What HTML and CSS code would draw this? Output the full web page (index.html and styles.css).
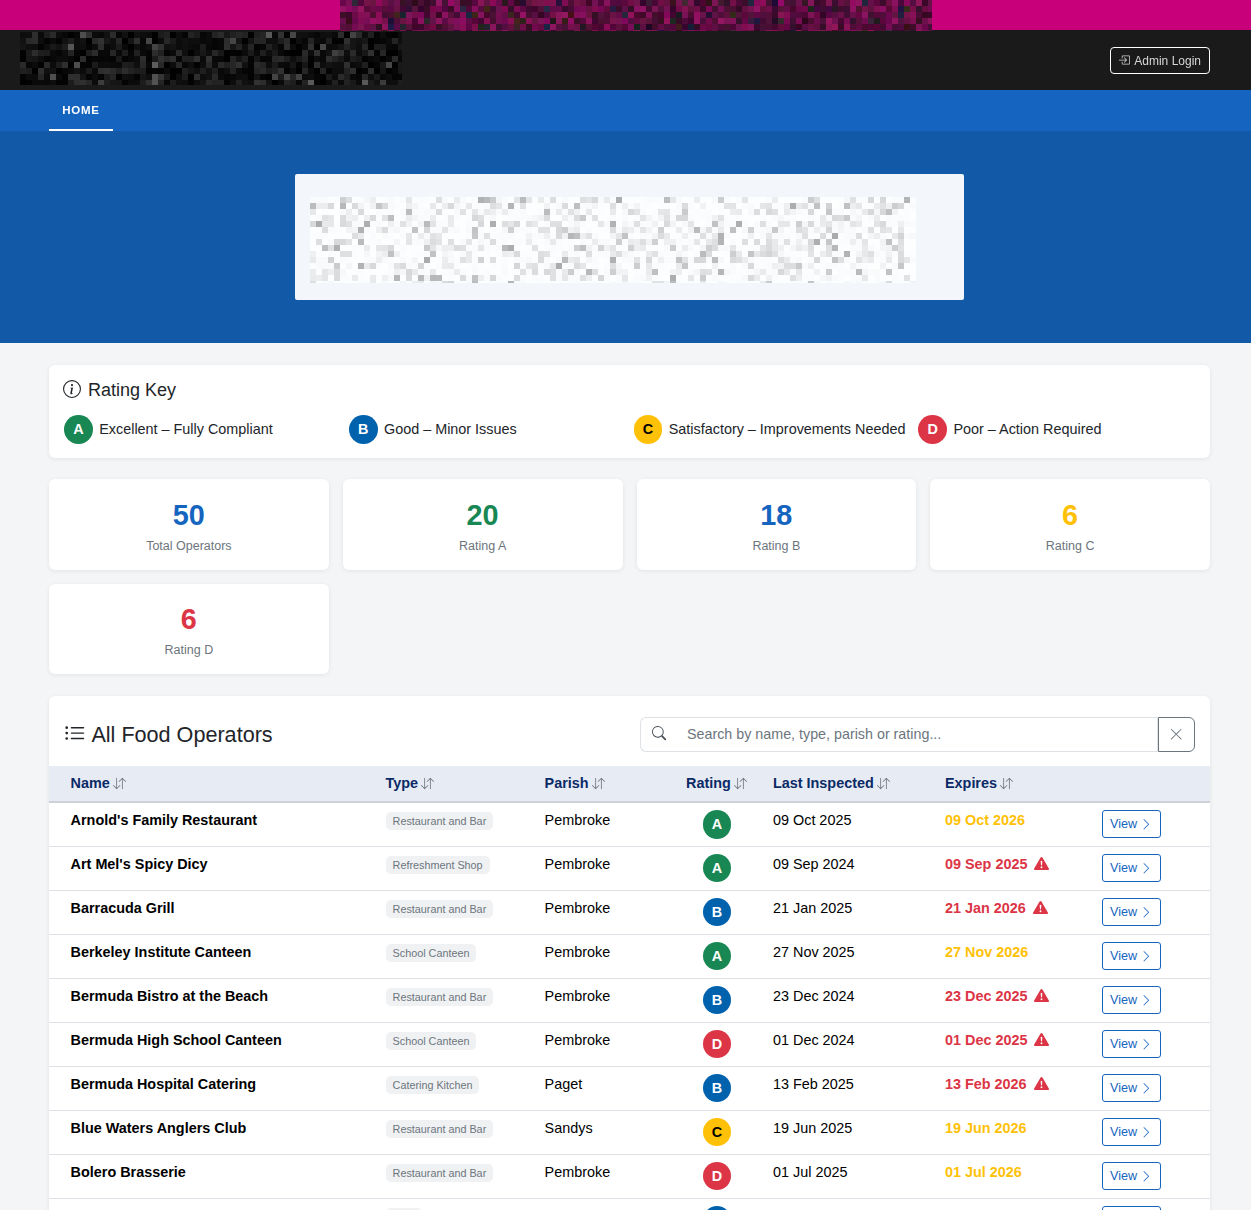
FILE: index.html
```html
<!DOCTYPE html>
<html lang="en">
<head>
    <meta charset="UTF-8">
    <meta name="viewport" content="width=device-width, initial-scale=1.0">
    <title>Food Operators</title>
    <link rel="stylesheet" href="styles.css">
</head>
<body>

    <svg class="icon-sprite" aria-hidden="true">
        <symbol id="i-login" viewBox="0 0 16 16"><path fill-rule="evenodd" d="M6 3.5a.5.5 0 0 1 .5-.5h8a.5.5 0 0 1 .5.5v9a.5.5 0 0 1-.5.5h-8a.5.5 0 0 1-.5-.5v-2a.5.5 0 0 0-1 0v2A1.5 1.5 0 0 0 6.5 14h8a1.5 1.5 0 0 0 1.5-1.5v-9A1.5 1.5 0 0 0 14.5 2h-8A1.5 1.5 0 0 0 5 3.5v2a.5.5 0 0 0 1 0v-2z"/><path fill-rule="evenodd" d="M11.854 8.354a.5.5 0 0 0 0-.708l-3-3a.5.5 0 1 0-.708.708L10.293 7.5H1.5a.5.5 0 0 0 0 1h8.793l-2.147 2.146a.5.5 0 0 0 .708.708l3-3z"/></symbol>
        <symbol id="i-info" viewBox="0 0 16 16"><path d="M8 15A7 7 0 1 1 8 1a7 7 0 0 1 0 14zm0 1A8 8 0 1 0 8 0a8 8 0 0 0 0 16z"/><path d="m8.93 6.588-2.29.287-.082.38.45.083c.294.07.352.176.288.469l-.738 3.468c-.194.897.105 1.319.808 1.319.545 0 1.178-.252 1.465-.598l.088-.416c-.2.176-.492.246-.686.246-.275 0-.375-.193-.304-.533L8.93 6.588zM9 4.5a1 1 0 1 1-2 0 1 1 0 0 1 2 0z"/></symbol>
        <symbol id="i-list" viewBox="0 0 16 16"><path fill-rule="evenodd" d="M5 11.5a.5.5 0 0 1 .5-.5h9a.5.5 0 0 1 0 1h-9a.5.5 0 0 1-.5-.5zm0-4a.5.5 0 0 1 .5-.5h9a.5.5 0 0 1 0 1h-9a.5.5 0 0 1-.5-.5zm0-4a.5.5 0 0 1 .5-.5h9a.5.5 0 0 1 0 1h-9a.5.5 0 0 1-.5-.5zm-3 1a1 1 0 1 0 0-2 1 1 0 0 0 0 2zm0 4a1 1 0 1 0 0-2 1 1 0 0 0 0 2zm0 4a1 1 0 1 0 0-2 1 1 0 0 0 0 2z"/></symbol>
        <symbol id="i-search" viewBox="0 0 16 16"><path d="M11.742 10.344a6.5 6.5 0 1 0-1.397 1.398h-.001c.03.04.062.078.098.115l3.85 3.85a1 1 0 0 0 1.415-1.414l-3.85-3.85a1.007 1.007 0 0 0-.115-.1zM12 6.5a5.5 5.5 0 1 1-11 0 5.5 5.5 0 0 1 11 0z"/></symbol>
        <symbol id="i-x" viewBox="0 0 16 16"><path d="M2.146 2.854a.5.5 0 1 1 .708-.708L8 7.293l5.146-5.147a.5.5 0 0 1 .708.708L8.707 8l5.147 5.146a.5.5 0 0 1-.708.708L8 8.707l-5.146 5.147a.5.5 0 0 1-.708-.708L7.293 8 2.146 2.854Z"/></symbol>
        <symbol id="i-sort" viewBox="0 0 16 16"><path fill-rule="evenodd" d="M11.5 15a.5.5 0 0 0 .5-.5V2.707l3.146 3.147a.5.5 0 0 0 .708-.708l-4-4a.5.5 0 0 0-.708 0l-4 4a.5.5 0 1 0 .708.708L11 2.707V14.5a.5.5 0 0 0 .5.5zm-7-14a.5.5 0 0 1 .5.5v11.793l3.146-3.147a.5.5 0 0 1 .708.708l-4 4a.5.5 0 0 1-.708 0l-4-4a.5.5 0 0 1 .708-.708L4 13.293V1.5a.5.5 0 0 1 .5-.5z"/></symbol>
        <symbol id="i-warn" viewBox="0 0 16 16"><path d="M8.982 1.566a1.13 1.13 0 0 0-1.96 0L.165 13.233c-.457.778.091 1.767.98 1.767h13.713c.889 0 1.438-.99.98-1.767L8.982 1.566zM8 5c.535 0 .954.462.9.995l-.35 3.507a.552.552 0 0 1-1.1 0L7.1 5.995A.905.905 0 0 1 8 5zm.002 6a1 1 0 1 1 0 2 1 1 0 0 1 0-2z"/></symbol>
        <symbol id="i-chevron" viewBox="0 0 16 16"><path fill-rule="evenodd" d="M4.646 1.646a.5.5 0 0 1 .708 0l6 6a.5.5 0 0 1 0 .708l-6 6a.5.5 0 0 1-.708-.708L10.293 8 4.646 2.354a.5.5 0 0 1 0-.708z"/></symbol>
    </svg>

    <div class="top-banner">
        <canvas class="mosaic" width="592" height="31" data-style="magenta"></canvas>
    </div>

    <header class="brand-bar">
        <canvas class="mosaic brand-logo" width="382" height="53" data-style="dark"></canvas>
        <a class="btn-login" href="#"><svg class="icon"><use href="#i-login"/></svg> Admin Login</a>
    </header>

    <nav class="main-nav">
        <a class="nav-tab" href="#">HOME</a>
    </nav>

    <section class="hero">
        <div class="hero-card">
            <canvas class="mosaic" width="606" height="86" data-style="light"></canvas>
        </div>
    </section>

    <main class="content">

        <section class="card rating-key">
            <h2 class="key-title"><svg class="icon"><use href="#i-info"/></svg> Rating Key</h2>
            <div class="key-grid">
                <div class="key-item"><span class="grade grade-a">A</span> Excellent – Fully Compliant</div>
                <div class="key-item"><span class="grade grade-b">B</span> Good – Minor Issues</div>
                <div class="key-item"><span class="grade grade-c">C</span> Satisfactory – Improvements Needed</div>
                <div class="key-item"><span class="grade grade-d">D</span> Poor – Action Required</div>
            </div>
        </section>

        <section class="stats">
            <div class="card stat"><div class="stat-num text-blue">50</div><div class="stat-label">Total Operators</div></div>
            <div class="card stat"><div class="stat-num text-green">20</div><div class="stat-label">Rating A</div></div>
            <div class="card stat"><div class="stat-num text-blue">18</div><div class="stat-label">Rating B</div></div>
            <div class="card stat"><div class="stat-num text-amber">6</div><div class="stat-label">Rating C</div></div>
            <div class="card stat"><div class="stat-num text-red">6</div><div class="stat-label">Rating D</div></div>
        </section>

        <section class="card operators">
            <div class="operators-head">
                <h2 class="operators-title"><svg class="icon"><use href="#i-list"/></svg> All Food Operators</h2>
                <div class="search">
                    <span class="search-icon"><svg class="icon"><use href="#i-search"/></svg></span>
                    <input class="search-input" type="text" placeholder="Search by name, type, parish or rating...">
                    <button class="search-clear"><svg class="icon"><use href="#i-x"/></svg></button>
                </div>
            </div>

            <table class="op-table">
                <colgroup>
                    <col class="col-name"><col class="col-type"><col class="col-parish"><col class="col-rating"><col class="col-last"><col class="col-exp"><col>
                </colgroup>
                <thead>
                    <tr>
                        <th>Name <svg class="sort"><use href="#i-sort"/></svg></th>
                        <th>Type <svg class="sort"><use href="#i-sort"/></svg></th>
                        <th>Parish <svg class="sort"><use href="#i-sort"/></svg></th>
                        <th>Rating <svg class="sort"><use href="#i-sort"/></svg></th>
                        <th>Last Inspected <svg class="sort"><use href="#i-sort"/></svg></th>
                        <th>Expires <svg class="sort"><use href="#i-sort"/></svg></th>
                        <th></th>
                    </tr>
                </thead>
                <tbody>
                    <tr>
                        <td class="op-name">Arnold's Family Restaurant</td>
                        <td><span class="type-badge">Restaurant and Bar</span></td>
                        <td>Pembroke</td>
                        <td class="op-grade"><span class="grade grade-a">A</span></td>
                        <td>09 Oct 2025</td>
                        <td class="exp-soon">09 Oct 2026</td>
                        <td class="op-action"><a class="btn-view" href="#">View <svg class="icon"><use href="#i-chevron"/></svg></a></td>
                    </tr>
                    <tr>
                        <td class="op-name">Art Mel's Spicy Dicy</td>
                        <td><span class="type-badge">Refreshment Shop</span></td>
                        <td>Pembroke</td>
                        <td class="op-grade"><span class="grade grade-a">A</span></td>
                        <td>09 Sep 2024</td>
                        <td class="exp-late">09 Sep 2025 <svg class="warn"><use href="#i-warn"/></svg></td>
                        <td class="op-action"><a class="btn-view" href="#">View <svg class="icon"><use href="#i-chevron"/></svg></a></td>
                    </tr>
                    <tr>
                        <td class="op-name">Barracuda Grill</td>
                        <td><span class="type-badge">Restaurant and Bar</span></td>
                        <td>Pembroke</td>
                        <td class="op-grade"><span class="grade grade-b">B</span></td>
                        <td>21 Jan 2025</td>
                        <td class="exp-late">21 Jan 2026 <svg class="warn"><use href="#i-warn"/></svg></td>
                        <td class="op-action"><a class="btn-view" href="#">View <svg class="icon"><use href="#i-chevron"/></svg></a></td>
                    </tr>
                    <tr>
                        <td class="op-name">Berkeley Institute Canteen</td>
                        <td><span class="type-badge">School Canteen</span></td>
                        <td>Pembroke</td>
                        <td class="op-grade"><span class="grade grade-a">A</span></td>
                        <td>27 Nov 2025</td>
                        <td class="exp-soon">27 Nov 2026</td>
                        <td class="op-action"><a class="btn-view" href="#">View <svg class="icon"><use href="#i-chevron"/></svg></a></td>
                    </tr>
                    <tr>
                        <td class="op-name">Bermuda Bistro at the Beach</td>
                        <td><span class="type-badge">Restaurant and Bar</span></td>
                        <td>Pembroke</td>
                        <td class="op-grade"><span class="grade grade-b">B</span></td>
                        <td>23 Dec 2024</td>
                        <td class="exp-late">23 Dec 2025 <svg class="warn"><use href="#i-warn"/></svg></td>
                        <td class="op-action"><a class="btn-view" href="#">View <svg class="icon"><use href="#i-chevron"/></svg></a></td>
                    </tr>
                    <tr>
                        <td class="op-name">Bermuda High School Canteen</td>
                        <td><span class="type-badge">School Canteen</span></td>
                        <td>Pembroke</td>
                        <td class="op-grade"><span class="grade grade-d">D</span></td>
                        <td>01 Dec 2024</td>
                        <td class="exp-late">01 Dec 2025 <svg class="warn"><use href="#i-warn"/></svg></td>
                        <td class="op-action"><a class="btn-view" href="#">View <svg class="icon"><use href="#i-chevron"/></svg></a></td>
                    </tr>
                    <tr>
                        <td class="op-name">Bermuda Hospital Catering</td>
                        <td><span class="type-badge">Catering Kitchen</span></td>
                        <td>Paget</td>
                        <td class="op-grade"><span class="grade grade-b">B</span></td>
                        <td>13 Feb 2025</td>
                        <td class="exp-late">13 Feb 2026 <svg class="warn"><use href="#i-warn"/></svg></td>
                        <td class="op-action"><a class="btn-view" href="#">View <svg class="icon"><use href="#i-chevron"/></svg></a></td>
                    </tr>
                    <tr>
                        <td class="op-name">Blue Waters Anglers Club</td>
                        <td><span class="type-badge">Restaurant and Bar</span></td>
                        <td>Sandys</td>
                        <td class="op-grade"><span class="grade grade-c">C</span></td>
                        <td>19 Jun 2025</td>
                        <td class="exp-soon">19 Jun 2026</td>
                        <td class="op-action"><a class="btn-view" href="#">View <svg class="icon"><use href="#i-chevron"/></svg></a></td>
                    </tr>
                    <tr>
                        <td class="op-name">Bolero Brasserie</td>
                        <td><span class="type-badge">Restaurant and Bar</span></td>
                        <td>Pembroke</td>
                        <td class="op-grade"><span class="grade grade-d">D</span></td>
                        <td>01 Jul 2025</td>
                        <td class="exp-soon">01 Jul 2026</td>
                        <td class="op-action"><a class="btn-view" href="#">View <svg class="icon"><use href="#i-chevron"/></svg></a></td>
                    </tr>
                    <tr>
                        <td class="op-name">&nbsp;</td>
                        <td><span class="type-badge">Cafe</span></td>
                        <td>&nbsp;</td>
                        <td class="op-grade"><span class="grade grade-b">B</span></td>
                        <td>&nbsp;</td>
                        <td>&nbsp;</td>
                        <td class="op-action"><a class="btn-view" href="#">View <svg class="icon"><use href="#i-chevron"/></svg></a></td>
                    </tr>
                </tbody>
            </table>
        </section>
    </main>

    <script src="mosaic.js"></script>
</body>
</html>
```

FILE: styles.css
```css
* {
    box-sizing: border-box;
}
html, body {
    height: 1210px;
    overflow: hidden;
}
body {
    margin: 0;
    font-family: "Liberation Sans", Arial, sans-serif;
    font-size: 14.4px;
    color: #000;
    background-color: #f4f5f7;
}
.icon-sprite {
    display: none;
}
.icon {
    width: 1em;
    height: 1em;
    fill: currentColor;
    vertical-align: -0.125em;
}
.mosaic {
    display: block;
    flex: none;
}

/* header bands */
.top-banner {
    height: 30px;
    padding-left: 340px;
    background-color: #c8007a;
}
.brand-bar {
    display: flex;
    justify-content: space-between;
    align-items: center;
    height: 60px;
    padding: 0 41px 0 20px;
    background-color: #1a1a1a;
}
.brand-logo {
    align-self: flex-start;
    margin-top: 2px;
}
.btn-login {
    display: block;
    height: 27px;
    padding: 0 8px;
    border: 1px solid #fff;
    border-radius: 4px;
    font-size: 12px;
    line-height: 26px;
    color: #d6d6d6;
    text-decoration: none;
}
.btn-login .icon {
    margin: 0 2px 0 -1px;
}
.main-nav {
    display: flex;
    height: 41px;
    padding-left: 49px;
    background-color: #1565c0;
}
.nav-tab {
    width: 64px;
    border-bottom: 2px solid #fff;
    font-size: 11.5px;
    font-weight: bold;
    letter-spacing: 0.7px;
    line-height: 40px;
    text-align: center;
    color: #fff;
    text-decoration: none;
}
.hero {
    display: flex;
    height: 212px;
    padding: 43px 0 0 295px;
    background-color: #1259a8;
}
.hero-card {
    width: 669px;
    height: 126px;
    padding: 23px 0 0 15px;
    border-radius: 2px;
    background-color: #f3f6fb;
}

/* page body */
.content {
    padding: 22px 41px 0 49px;
}
.card {
    border-radius: 6px;
    background-color: #fff;
    box-shadow: 0 1px 4px rgba(0,0,0,0.08);
}
.rating-key {
    height: 93px;
    padding: 14px 15px 0;
}
.key-title {
    margin: 0 0 14px;
    font-size: 18px;
    font-weight: normal;
    line-height: 22px;
    color: #212529;
}
.key-title .icon {
    width: 18px;
    height: 18px;
    margin: 0 2px 0 -1px;
    vertical-align: -2px;
}
.key-grid {
    display: grid;
    grid-template-columns: repeat(4, 1fr);
    gap: 8px;
}
.key-item {
    display: flex;
    align-items: center;
    gap: 6.4px;
    font-size: 14.4px;
    color: #212529;
}
.grade {
    display: inline-flex;
    justify-content: center;
    align-items: center;
    flex: none;
    width: 28.8px;
    height: 28.8px;
    border-radius: 50%;
    font-size: 14.4px;
    font-weight: bold;
    color: #fff;
}
.grade-a { background-color: #198754; }
.grade-b { background-color: #0062ad; }
.grade-c { background-color: #ffc107; color: #000; }
.grade-d { background-color: #dc3545; }

.stats {
    display: grid;
    grid-template-columns: repeat(4, 1fr);
    gap: 14px;
    margin-top: 21px;
}
.stat {
    height: 90.5px;
    padding-top: 18.5px;
    text-align: center;
}
.stat-num {
    font-size: 28.8px;
    font-weight: bold;
    line-height: 34px;
}
.stat-label {
    margin-top: 6px;
    font-size: 12.5px;
    line-height: 16px;
    color: #6c757d;
}
.text-blue { color: #1565c0; }
.text-green { color: #198754; }
.text-amber { color: #ffc107; }
.text-red { color: #dc3545; }

/* operators table */
.operators {
    margin-top: 22px;
    overflow: hidden;
}
.operators-head {
    display: flex;
    justify-content: space-between;
    align-items: center;
    height: 70px;
    padding: 7px 15px 0;
}
.operators-title {
    margin: 0;
    font-size: 21.6px;
    font-weight: normal;
    color: #212529;
}
.operators-title .icon {
    margin-right: 1px;
}
.search {
    display: flex;
    width: 555px;
    height: 35px;
}
.search-icon {
    width: 37px;
    padding-top: 1px;
    border: 1px solid #dee2e6;
    border-right: none;
    border-radius: 6px 0 0 6px;
    font-size: 14.4px;
    line-height: 31px;
    text-align: center;
    color: #495057;
}
.search-input {
    flex: 1;
    min-width: 0;
    padding: 0 10px 2px;
    border: 1px solid #dee2e6;
    border-left: none;
    font-family: inherit;
    font-size: 14.3px;
    color: #212529;
}
.search-input::placeholder {
    color: #6c757d;
}
.search-clear {
    width: 37px;
    padding: 0;
    border: 1px solid #6c757d;
    border-radius: 0 6px 6px 0;
    font-size: 14.4px;
    color: #6c757d;
    background-color: #fff;
}
.op-table {
    width: 100%;
    table-layout: fixed;
    border-collapse: collapse;
}
.col-name { width: 336.6px; }
.col-type { width: 159px; }
.col-parish { width: 141.4px; }
.col-rating { width: 87px; }
.col-last { width: 172px; }
.col-exp { width: 157px; }
.op-table th {
    height: 36px;
    padding: 0 0 2px 21.6px;
    border-bottom: 2px solid #ced1d6;
    font-size: 14.4px;
    text-align: left;
    color: #0a2a66;
    background-color: #e7ebf4;
}
.op-table td {
    height: 44px;
    padding: 9px 0 0 21.6px;
    border-bottom: 1px solid #dee2e6;
    vertical-align: top;
}
.op-table th:nth-child(n+2), .op-table td:nth-child(n+2) {
    padding-left: 0;
}
.op-name {
    font-weight: bold;
}
.op-table td.op-grade {
    padding-top: 7px;
    padding-left: 16.6px;
}
.op-table td.op-action {
    padding-top: 7px;
}
.sort {
    width: 13px;
    height: 13px;
    margin-left: -1px;
    fill: #6c757d;
    vertical-align: -2.5px;
}
.type-badge {
    display: inline-block;
    padding: 3px 7px;
    border-radius: 5px;
    font-size: 10.8px;
    color: #6c757d;
    background-color: #f0f1f3;
}
.exp-soon, .exp-late {
    font-weight: bold;
}
.exp-soon { color: #ffc107; }
.exp-late { color: #dc3545; }
.warn {
    width: 15px;
    height: 15px;
    margin: -2px 0 -2px 3px;
    fill: #dc3545;
    vertical-align: 0;
}
.btn-view {
    display: block;
    width: 59px;
    height: 28px;
    padding: 0 7px;
    border: 1px solid #1565c0;
    border-radius: 3px;
    font-size: 12.6px;
    line-height: 26px;
    white-space: nowrap;
    color: #1565c0;
    text-decoration: none;
}
.btn-view .icon {
    margin-left: -1px;
    vertical-align: -3px;
}
```

FILE: mosaic.js
```js
// Fills each .mosaic canvas with a blurred-out block pattern (6px cells)
const cellSize = 6;

// Small seeded generator, so every load draws the same blocks
function makeRandom(seed) {
    let s = seed;
    return function() {
        s = (s * 1664525 + 1013904223) % 4294967296;
        return s / 4294967296;
    };
}

const palettes = {
    magenta: function(r) {
        const v = r();
        if (v < 0.12) return `rgb(${20 + r() * 50}, ${5 + r() * 40}, ${20 + r() * 50})`;
        const k = 0.3 + r() * 0.6;
        return `rgb(${165 * k}, ${10 * k + r() * 15}, ${100 * k + r() * 15})`;
    },
    dark: function(r) {
        const v = r();
        const g = v < 0.5 ? r() * 15 : v < 0.95 ? 12 + r() * 38 : 50 + r() * 45;
        return `rgb(${g}, ${g}, ${g})`;
    },
    light: function(r) {
        const v = r();
        const g = v < 0.6 ? 250 + r() * 5 : v < 0.92 ? 215 + r() * 35 : 170 + r() * 45;
        return `rgb(${g - 2}, ${g}, ${g + 2})`;
    }
};

document.querySelectorAll('.mosaic').forEach(function(canvas, index) {
    const ctx = canvas.getContext('2d');
    const random = makeRandom(7919 * (index + 1));
    const pick = palettes[canvas.dataset.style];
    for (let y = 0; y < canvas.height; y += cellSize) {
        for (let x = 0; x < canvas.width; x += cellSize) {
            ctx.fillStyle = pick(random);
            ctx.fillRect(x, y, cellSize, cellSize);
        }
    }
});
```
